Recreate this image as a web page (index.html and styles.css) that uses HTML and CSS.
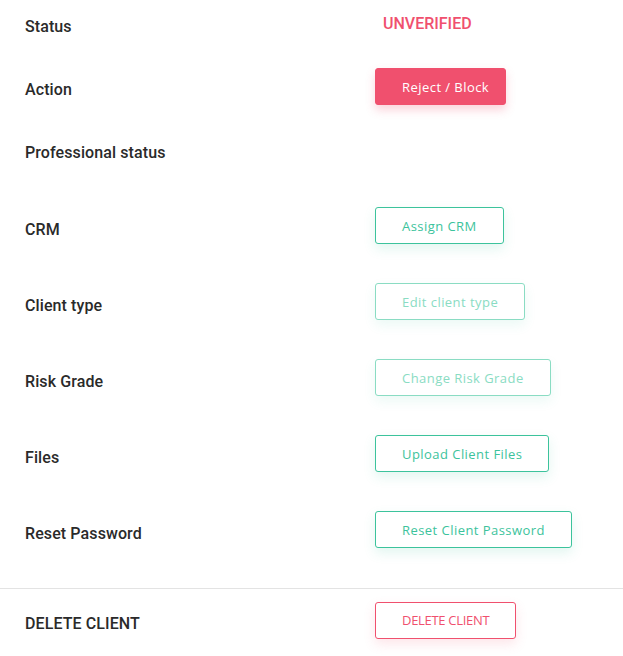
FILE: index.html
```html
<!DOCTYPE html>
<html>
<head>
<meta charset="utf-8">
<link rel="stylesheet" href="styles.css">
</head>
<body>
<div class="panel">
  <div class="row row-status">
    <div class="label">Status</div>
    <div class="value"><span class="status-text">UNVERIFIED</span></div>
  </div>
  <div class="row row-action">
    <div class="label">Action</div>
    <div class="value"><button class="btn btn-danger">Reject / Block</button></div>
  </div>
  <div class="row row-plain">
    <div class="label">Professional status</div>
    <div class="value"></div>
  </div>
  <div class="row row-btn">
    <div class="label">CRM</div>
    <div class="value"><button class="btn btn-outline">Assign CRM</button></div>
  </div>
  <div class="row row-btn">
    <div class="label">Client type</div>
    <div class="value"><button class="btn btn-outline is-muted">Edit client type</button></div>
  </div>
  <div class="row row-btn">
    <div class="label">Risk Grade</div>
    <div class="value"><button class="btn btn-outline is-muted">Change Risk Grade</button></div>
  </div>
  <div class="row row-btn">
    <div class="label">Files</div>
    <div class="value"><button class="btn btn-outline">Upload Client Files</button></div>
  </div>
  <div class="row row-btn">
    <div class="label">Reset Password</div>
    <div class="value"><button class="btn btn-outline">Reset Client Password</button></div>
  </div>
  <hr class="divider">
  <div class="row row-delete">
    <div class="label">DELETE CLIENT</div>
    <div class="value"><button class="btn btn-outline-danger">DELETE CLIENT</button></div>
  </div>
</div>
</body>
</html>
```
FILE: styles.css
```css
html, body {
  margin: 0;
  padding: 0;
  background: #ffffff;
}
body {
  font-family: Roboto, "Liberation Sans", sans-serif;
  color: #2b2b2b;
}
.panel {
  width: 623px;
}
.row {
  display: grid;
  grid-template-columns: 375px 1fr;
  align-items: center;
}
.label {
  padding-left: 25px;
  font-size: 16px;
  font-weight: 500;
  line-height: 19px;
  color: #2a2a2a;
  letter-spacing: 0.1px;
}
.value {
  padding-bottom: 5px;
  display: flex;
  align-items: center;
}
.row-status { height: 52px; }
.row-action { height: 74px; }
.row-plain { height: 64px; }
.row-plain .label { padding-bottom: 12px; }
.row-btn { height: 76px; }
.row-btn .label { padding-top: 2px; }
.row-delete { height: 67px; }
.row-delete .label { padding-top: 2px; }
.status-text {
  padding-left: 8px;
  font-size: 16px;
  font-weight: 500;
  color: #f0506e;
  line-height: 19px;
}
.btn {
  box-sizing: border-box;
  height: 37px;
  padding: 0 26px;
  border-radius: 3px;
  font-family: "Open Sans", sans-serif;
  font-size: 13px;
  font-weight: 400;
  letter-spacing: 0.45px;
  cursor: pointer;
  background: #ffffff;
}
.btn-danger {
  background: #f0506e;
  border: 1px solid #f0506e;
  color: #ffffff;
  padding: 0 16px 0 26px;
  box-shadow: 0 5px 10px rgba(240, 80, 110, 0.25);
}
.btn-outline {
  border: 1px solid #3cc39c;
  color: #3cc39c;
  box-shadow: 0 5px 12px rgba(60, 195, 156, 0.15);
}
.btn-outline.is-muted {
  border-color: #8adcc3;
  color: #8adcc3;
  box-shadow: 0 5px 12px rgba(60, 195, 156, 0.1);
}
.btn-outline-danger {
  border: 1px solid #f0506e;
  color: #f0506e;
  letter-spacing: -0.3px;
  box-shadow: 0 5px 12px rgba(240, 80, 110, 0.15);
}
.divider {
  margin: 18px 0 0 0;
  border: 0;
  border-top: 1px solid #e3e3e3;
  height: 0;
}
```
